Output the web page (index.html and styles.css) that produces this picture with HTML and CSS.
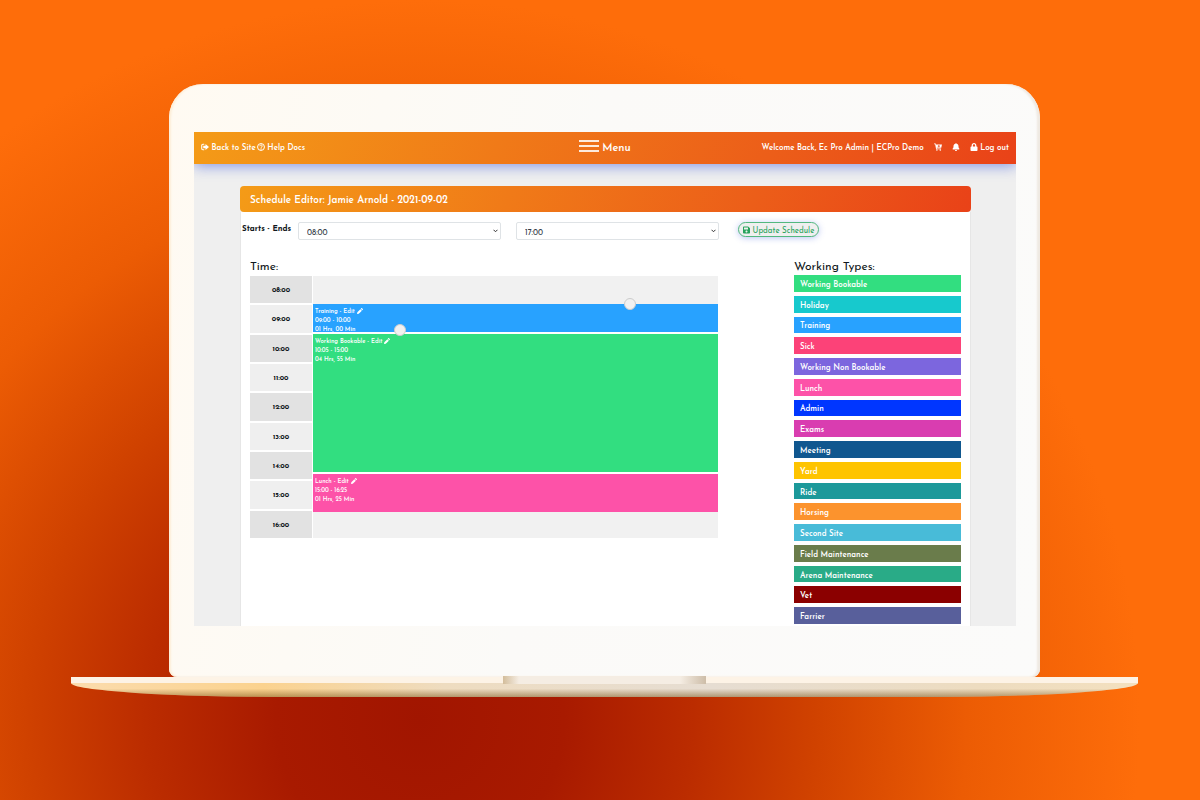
FILE: index.html
```html
<!DOCTYPE html>
<html lang="en">
  <head>
    <meta charset="UTF-8" />
    <title>Schedule Editor</title>
    <link rel="stylesheet" href="styles.css">
  </head>
  <body>
    <!-- Icons used more than once or in the nav -->
    <svg class="icon-defs" aria-hidden="true">
      <symbol id="icon-signout" viewBox="0 0 16 16">
        <path d="M6.5 2.5H3.8A2.3 2.3 0 0 0 1.5 4.800v6.400a2.300 2.300 0 0 0 2.300 2.300h2.700" fill="none" stroke="currentColor" stroke-width="2.200" />
        <path d="M9 2 16 8 9 14V10.500H4.500V5.500h4.500z" />
      </symbol>
      <symbol id="icon-help" viewBox="0 0 16 16">
        <circle cx="8" cy="8" r="6.900" fill="none" stroke="currentColor" stroke-width="2" />
        <path d="M5.600 6.300c.2-3 5-3 5-.2 0 1.700-2.500 1.800-2.500 3.500" fill="none" stroke="currentColor" stroke-width="2" />
        <circle cx="8.100" cy="12" r="1.300" />
      </symbol>
      <symbol id="icon-cart" viewBox="0 0 16 16">
        <path d="M0 1h3.500l.4 2H16l-1.500 6.500H5.300l.3 1.300h8.600v1.700H4.200L2.300 2.700H0zM9 4v1.500H7.500v1.300H9v1.500h1.400V6.800h1.500V5.500h-1.500V4z" fill-rule="evenodd" />
        <circle cx="5.800" cy="14" r="1.600" />
        <circle cx="12.600" cy="14" r="1.600" />
      </symbol>
      <symbol id="icon-bell" viewBox="0 0 448 512">
        <path d="M224 512c35.320 0 63.970-28.650 63.970-64H160.030c0 35.350 28.650 64 63.970 64zm215.390-149.710c-19.320-20.760-55.470-51.990-55.470-154.290 0-77.700-54.480-139.900-127.940-155.160V32c0-17.670-14.320-32-31.980-32s-31.980 14.330-31.980 32v20.840C118.560 68.100 64.080 130.300 64.080 208c0 102.300-36.150 133.530-55.470 154.290-6 6.450-8.660 14.160-8.610 21.710.11 16.400 12.980 32 32.100 32h383.800c19.120 0 32-15.600 32.100-32 .05-7.550-2.610-15.270-8.610-21.710z" />
      </symbol>
      <symbol id="icon-lock" viewBox="0 0 448 512">
        <path d="M400 224h-24v-72C376 68.200 307.800 0 224 0S72 68.200 72 152v72H48c-26.500 0-48 21.500-48 48v192c0 26.500 21.500 48 48 48h352c26.500 0 48-21.500 48-48V272c0-26.500-21.500-48-48-48zm-104 0H152v-72c0-39.700 32.300-72 72-72s72 32.300 72 72v72z" />
      </symbol>
      <symbol id="icon-save" viewBox="0 0 448 512">
        <path d="M433.941 129.941l-83.882-83.882A48 48 0 0 0 316.118 32H48C21.490 32 0 53.490 0 80v352c0 26.510 21.490 48 48 48h352c26.510 0 48-21.490 48-48V163.882a48 48 0 0 0-14.059-33.941zM224 416c-35.346 0-64-28.654-64-64 0-35.346 28.654-64 64-64s64 28.654 64 64c0 35.346-28.654 64-64 64zm96-304.520V212c0 6.627-5.373 12-12 12H76c-6.627 0-12-5.373-12-12V108c0-6.627 5.373-12 12-12h228.520c3.183 0 6.235 1.264 8.485 3.515l3.480 3.480A11.996 11.996 0 0 1 320 111.480z" />
      </symbol>
      <symbol id="icon-pencil" viewBox="0 0 16 16">
        <path d="M0 16l.8-4.700L9 3l4 4-8.300 8.200zM10 2l1.500-1.500c.6-.6 1.400-.6 2 0l2 2c.6.6.6 1.400 0 2L14 6z" />
      </symbol>
    </svg>

    <div class="laptop">
      <div class="lid">
        <div class="screen">
          <header class="navbar">
            <nav class="nav-left">
              <a href="#"><svg class="icon"><use href="#icon-signout" /></svg> Back to Site</a>
              <a href="#"><svg class="icon"><use href="#icon-help" /></svg> Help Docs</a>
            </nav>
            <button type="button" class="menu-toggle">
              <span class="burger"><i></i><i></i><i></i></span>
              Menu
            </button>
            <nav class="nav-right">
              <span>Welcome Back, Ec Pro Admin | ECPro Demo</span>
              <a href="#" aria-label="Cart"><svg class="icon"><use href="#icon-cart" /></svg></a>
              <a href="#" aria-label="Notifications"><svg class="icon"><use href="#icon-bell" /></svg></a>
              <a href="#"><svg class="icon"><use href="#icon-lock" /></svg> Log out</a>
            </nav>
          </header>

          <main class="panel">
            <h1 class="panel-title">Schedule Editor: Jamie Arnold - 2021-09-02</h1>
            <div class="panel-body">
              <form class="hours-form">
                <label for="starts">Starts - Ends</label>
                <select id="starts" name="starts">
                  <option>08:00</option>
                </select>
                <select id="ends" name="ends" aria-label="Ends">
                  <option>17:00</option>
                </select>
                <button type="submit" class="update-btn"><svg class="icon"><use href="#icon-save" /></svg> Update Schedule</button>
              </form>

              <div class="columns">
                <section class="schedule">
                  <h2>Time:</h2>
                  <div class="timetable">
                    <ul class="hours">
                      <li>08:00</li>
                      <li>09:00</li>
                      <li>10:00</li>
                      <li>11:00</li>
                      <li>12:00</li>
                      <li>13:00</li>
                      <li>14:00</li>
                      <li>15:00</li>
                      <li>16:00</li>
                    </ul>
                    <div class="track">
                      <div class="events">
                        <div class="event training">
                          <div>Training - <a href="#">Edit <svg class="icon"><use href="#icon-pencil" /></svg></a></div>
                          <div>09:00 - 10:00</div>
                          <div>01 Hrs, 00 Min</div>
                          <span class="handle handle-start"></span>
                          <span class="handle handle-end"></span>
                        </div>
                        <div class="event bookable">
                          <div>Working Bookable - <a href="#">Edit <svg class="icon"><use href="#icon-pencil" /></svg></a></div>
                          <div>10:05 - 15:00</div>
                          <div>04 Hrs, 55 Min</div>
                        </div>
                        <div class="event lunch">
                          <div>Lunch - <a href="#">Edit <svg class="icon"><use href="#icon-pencil" /></svg></a></div>
                          <div>15:00 - 16:25</div>
                          <div>01 Hrs, 25 Min</div>
                        </div>
                      </div>
                    </div>
                  </div>
                </section>

                <section class="types">
                  <h2>Working Types:</h2>
                  <ul class="type-list">
                    <li class="bookable">Working Bookable</li>
                    <li class="holiday">Holiday</li>
                    <li class="training">Training</li>
                    <li class="sick">Sick</li>
                    <li class="non-bookable">Working Non Bookable</li>
                    <li class="lunch">Lunch</li>
                    <li class="admin">Admin</li>
                    <li class="exams">Exams</li>
                    <li class="meeting">Meeting</li>
                    <li class="yard">Yard</li>
                    <li class="ride">Ride</li>
                    <li class="horsing">Horsing</li>
                    <li class="second-site">Second Site</li>
                    <li class="field">Field Maintenance</li>
                    <li class="arena">Arena Maintenance</li>
                    <li class="vet">Vet</li>
                    <li class="farrier">Farrier</li>
                  </ul>
                </section>
              </div>
            </div>
          </main>
        </div>
      </div>
      <div class="base">
        <div class="notch"></div>
      </div>
    </div>
  </body>
</html>
```

FILE: styles.css
```css
* {
  box-sizing: border-box;
}

body {
  margin: 0;
  min-height: 100vh;
  padding: 84px 62px 0 71px;
  font-family: "Josefin Sans", Lato, sans-serif;
  font-size: 8px;
  line-height: 10px;
  color: #111820;
  background: radial-gradient(60% 90% at 35% 90%, #a11500 0%, #a81a00 20%, #bb2c00 38%, #d04200 55%, #ec5c04 76%, #fe6d0a 100%);
}

h1,
h2,
ul {
  margin: 0;
  padding: 0;
}

ul {
  list-style: none;
}

a {
  color: inherit;
  text-decoration: none;
}

button,
select {
  font-family: inherit;
}

.icon-defs {
  display: none;
}

.icon {
  width: 8px;
  height: 8px;
  fill: currentColor;
  vertical-align: -1px;
}

/* Laptop */
.lid {
  margin: 0 98px;
  padding: 48px 24px 51px 25px;
  border-radius: 34px 34px 8px 8px;
  background: linear-gradient(100deg, #fffaf2 0%, #fbfaf8 45%, #fbfbfa 100%);
  box-shadow: inset -3px 0 2px #efe9e2, inset 2px 0 2px #fdeed8;
}

.base {
  position: relative;
  height: 20px;
  border-top: 6px solid #fdf3e6;
  border-radius: 0 0 220px 220px / 0 0 14px 14px;
  background:
    linear-gradient(rgba(120, 80, 20, 0) 40%, rgba(120, 80, 20, 0.5) 100%),
    linear-gradient(90deg, #fbdcae 0%, #fbd28e 18%, #eedcc0 35%, #e6ddd2 60%, #eddcc0 85%, #f3e0bf 100%);
}

.notch {
  position: absolute;
  top: -7px;
  left: 432px;
  right: 432px;
  height: 8px;
  background: linear-gradient(90deg, #d3bd9b 0, #f5ede3 16px, #f5ede3 calc(100% - 26px), #cdbda8 100%);
}

.screen {
  overflow: hidden;
  background: #efefef;
}

/* Top bar */
.navbar {
  display: grid;
  grid-template-columns: 1fr auto 1fr;
  align-items: center;
  height: 32px;
  padding: 0 7px;
  color: #fff;
  font-weight: 600;
  background: linear-gradient(110deg, #f49b17 0%, #f07a18 37%, #ec5e19 70%, #e94218 100%);
  box-shadow: 0 2px 14px rgba(60, 90, 220, 0.6);
}

.nav-left {
  display: flex;
  gap: 1px;
}

.nav-right {
  display: flex;
  justify-content: flex-end;
  gap: 10px;
}

.menu-toggle {
  display: flex;
  align-items: center;
  gap: 3px;
  padding: 0;
  border: none;
  background: none;
  color: inherit;
  font-size: 11px;
  font-weight: 600;
  cursor: pointer;
}

.burger {
  display: flex;
  flex-direction: column;
  gap: 3px;
  width: 20px;
  margin-bottom: 4px;
}

.burger i {
  height: 2px;
  background: rgba(255, 255, 255, 0.85);
}

/* Panel */
.panel {
  margin: 22px 45px 0 46px;
}

.panel-title {
  padding: 9px 10px 5px;
  border-radius: 4px;
  color: #fff;
  font-size: 10px;
  line-height: 12px;
  font-weight: 600;
  background: linear-gradient(110deg, #f49b17 0%, #f07a18 37%, #ec5e19 70%, #e94218 100%);
}

.panel-body {
  padding: 10px 9px 2px;
  border: solid #e6e6e6;
  border-width: 0 1px;
  background: #fff;
}

.hours-form {
  display: flex;
  align-items: flex-start;
  margin-left: -8px;
}

.hours-form label {
  width: 56px;
  padding-top: 2px;
  font-weight: 700;
}

.hours-form select {
  width: 203px;
  height: 18px;
  margin-right: 15px;
  padding: 3px 8px 0;
  border: 1px solid #dfe3e6;
  border-radius: 2px;
  appearance: none;
  background: #fff url("data:image/svg+xml,%3Csvg xmlns='http://www.w3.org/2000/svg' viewBox='0 0 10 7'%3E%3Cpath d='M1 1l4 4 4-4' fill='none' stroke='%23333' stroke-width='2'/%3E%3C/svg%3E") right 2px center / 5px 4px no-repeat;
  color: #333c46;
  font-size: 8px;
}

.update-btn {
  height: 15px;
  margin-left: 4px;
  padding: 2px 4px 0;
  border: 1px solid #52b87f;
  border-radius: 8px;
  background: #efefef;
  color: #28a35c;
  font-size: 8px;
  line-height: 10px;
  box-shadow: 0 1px 6px rgba(60, 90, 220, 0.35);
  cursor: pointer;
}

.update-btn .icon {
  width: 7px;
}

.columns {
  display: flex;
  justify-content: space-between;
}

h2 {
  margin-top: 20px;
  font-size: 12px;
  line-height: 14px;
  font-weight: 400;
}

.schedule {
  width: 468px;
}

.types {
  width: 167px;
}

.timetable {
  display: flex;
  gap: 1px;
  height: 262px;
  margin-top: 2px;
}

.hours {
  display: flex;
  flex-direction: column;
  gap: 2px;
  width: 62px;
  font-size: 7px;
  font-weight: 700;
  text-align: center;
}

.hours li {
  display: flex;
  flex: 1;
  align-items: center;
  justify-content: center;
  padding-top: 3px;
  background: #efefef;
}

.hours li:nth-child(odd) {
  background: #e2e2e2;
}

.track {
  flex: 1;
  padding-top: 28px;
  background: #f1f1f1;
}

.events {
  display: flex;
  flex-direction: column;
  gap: 2px;
  background: #fff;
}

.event {
  position: relative;
  padding: 3px 2px 0;
  color: #fff;
  font-size: 6px;
  line-height: 9px;
  font-weight: 600;
}

.event .icon {
  width: 6px;
  height: 6px;
}

.event.training {
  height: 28px;
}

.event.bookable {
  height: 138px;
}

.event.lunch {
  height: 38px;
}

/* Drag handles on the selected event */
.handle {
  position: absolute;
  width: 12px;
  height: 12px;
  border: 1px solid #ccc;
  border-radius: 50%;
  background: #f1f1f1;
  z-index: 1;
  cursor: pointer;
}

.handle-start {
  top: -6px;
  right: 82px;
}

.handle-end {
  bottom: -4px;
  left: 20%;
}

.type-list {
  display: flex;
  flex-direction: column;
  gap: 4px;
  min-height: 349px;
  margin-top: 1px;
}

.type-list li {
  display: flex;
  flex: 1;
  align-items: center;
  padding: 3px 6px 0;
  color: #fff;
  font-weight: 600;
}

/* Working type colours */
.bookable { background: #32de80; }
.holiday { background: #17c9cd; }
.training { background: #28a2ff; }
.sick { background: #fc4278; }
.non-bookable { background: #7c66de; }
.lunch { background: #fd52a8; }
.admin { background: #0036ff; }
.exams { background: #d93db0; }
.meeting { background: #10578f; }
.yard { background: #fec400; }
.ride { background: #1c999a; }
.horsing { background: #fc932d; }
.second-site { background: #48bbd8; }
.field { background: #6a7c4b; }
.arena { background: #29ab87; }
.vet { background: #8b0000; }
.farrier { background: #585f9b; }
```
